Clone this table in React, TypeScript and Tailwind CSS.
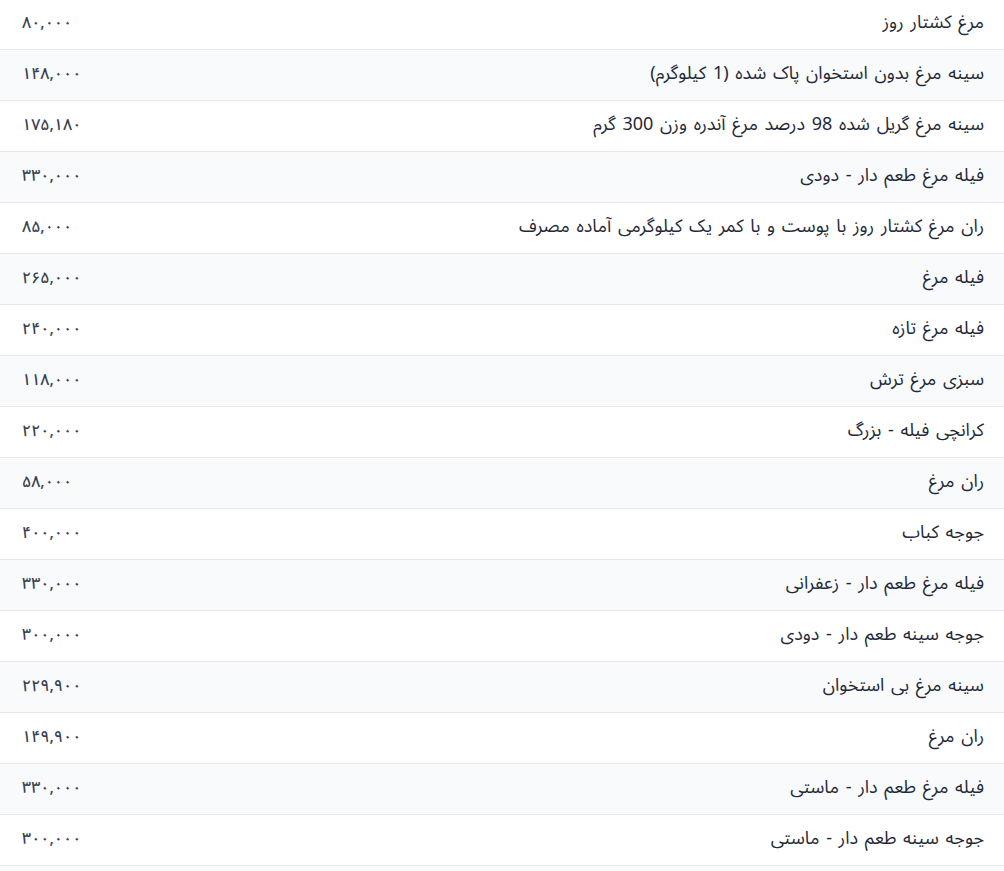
import React from "react";

const rows: [string, string][] = [
  ["مرغ کشتار روز", "۸۰,۰۰۰"],
  ["سینه مرغ بدون استخوان پاک شده (1 کیلوگرم)", "۱۴۸,۰۰۰"],
  ["سینه مرغ گریل شده 98 درصد مرغ آندره وزن 300 گرم", "۱۷۵,۱۸۰"],
  ["فیله مرغ طعم دار - دودی", "۳۳۰,۰۰۰"],
  ["ران مرغ کشتار روز با پوست و با کمر یک کیلوگرمی آماده مصرف", "۸۵,۰۰۰"],
  ["فیله مرغ", "۲۶۵,۰۰۰"],
  ["فیله مرغ تازه", "۲۴۰,۰۰۰"],
  ["سبزی مرغ ترش", "۱۱۸,۰۰۰"],
  ["کرانچی فیله - بزرگ", "۲۲۰,۰۰۰"],
  ["ران مرغ", "۵۸,۰۰۰"],
  ["جوجه کباب", "۴۰۰,۰۰۰"],
  ["فیله مرغ طعم دار - زعفرانی", "۳۳۰,۰۰۰"],
  ["جوجه سینه طعم دار - دودی", "۳۰۰,۰۰۰"],
  ["سینه مرغ بی استخوان", "۲۲۹,۹۰۰"],
  ["ران مرغ", "۱۴۹,۹۰۰"],
  ["فیله مرغ طعم دار - ماستی", "۳۳۰,۰۰۰"],
  ["جوجه سینه طعم دار - ماستی", "۳۰۰,۰۰۰"],
];

export default function App() {
  return (
    <div
      dir="rtl"
      className="w-full h-[871px] overflow-hidden bg-[#f9fafb]"
      style={{ fontFamily: '"Noto Sans Arabic", "Noto Sans", "DejaVu Sans", sans-serif' }}
    >
      <div className="-mt-px">
        {rows.map(([name, price], i) => (
          <div
            key={i}
            className={`flex items-center justify-between h-[51px] pb-[3px] pr-5 pl-[22px] border-b border-[#e5e7eb] ${
              i % 2 === 1 ? "bg-[#f9fafb]" : "bg-white"
            }`}
          >
            <span className="text-[18px] [word-spacing:2px] text-[#1f2937]">{name}</span>
            <span className="text-base font-medium text-[#374151]">{price}</span>
          </div>
        ))}
      </div>
    </div>
  );
}
